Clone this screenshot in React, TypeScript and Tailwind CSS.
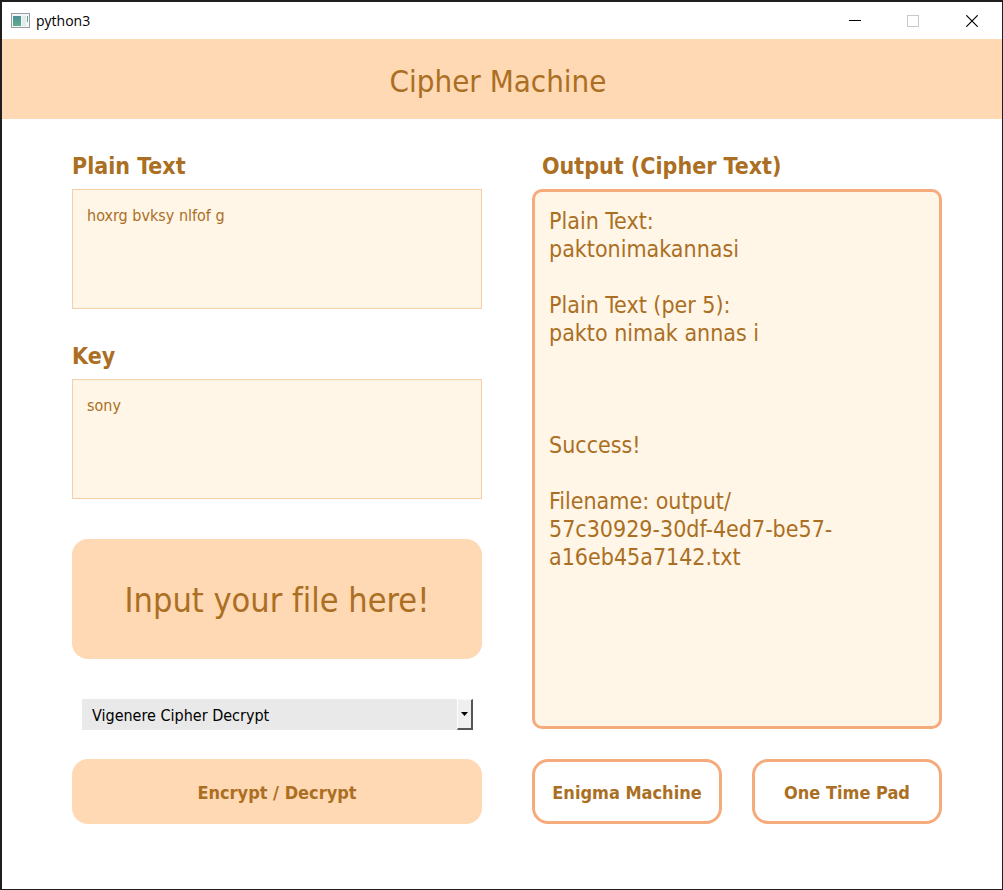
import { useState } from "react";

const outputText = `Plain Text:
paktonimakannasi

Plain Text (per 5):
pakto nimak annas i



Success!

Filename: output/
57c30929-30df-4ed7-be57-
a16eb45a7142.txt`;

const ciphers = [
  "Vigenere Cipher Encrypt",
  "Vigenere Cipher Decrypt",
  "Playfair Cipher Encrypt",
  "Playfair Cipher Decrypt",
];

function TitleBar() {
  return (
    <header className="flex h-[37px] items-center bg-white pl-[9px] text-black">
      <svg width="19" height="15" viewBox="0 0 19 15" aria-hidden="true">
        <defs>
          <linearGradient id="app-pane" x1="0" y1="0" x2="0" y2="1">
            <stop offset="0" stopColor="#4b8f96" />
            <stop offset="1" stopColor="#5fae8c" />
          </linearGradient>
        </defs>
        <rect x="0.5" y="0.5" width="18" height="14" fill="#f4f5f6" stroke="#9a9ea6" />
        <rect x="2" y="3" width="8" height="10" fill="url(#app-pane)" />
        <rect x="11" y="3" width="4" height="10" fill="#e4e9ec" />
        <rect x="16" y="3" width="1" height="6" fill="#5fa890" />
      </svg>
      <span className="grow pl-[6px] font-['Open_Sans','Noto_Sans',sans-serif] text-sm">python3</span>
      <button type="button" aria-label="Minimize" className="flex h-full w-[58px] items-center justify-center">
        <svg width="12" height="12" viewBox="0 0 12 12" shapeRendering="crispEdges">
          <path d="M0 5.5H12" stroke="#000" />
        </svg>
      </button>
      <button type="button" aria-label="Maximize" disabled className="flex h-full w-[58px] items-center justify-center">
        <svg width="12" height="12" viewBox="0 0 12 12">
          <rect x="0.5" y="0.5" width="11" height="11" fill="none" stroke="#c8c8c8" />
        </svg>
      </button>
      <button type="button" aria-label="Close" className="flex h-full w-[60px] items-center justify-center">
        <svg width="12" height="12" viewBox="0 0 12 12">
          <path d="M0.3 0.3L11.7 11.7M11.7 0.3L0.3 11.7" stroke="#000" strokeWidth="1.2" />
        </svg>
      </button>
    </header>
  );
}

const labelClass = "flex h-[30px] items-center pt-1 text-[23px] font-bold";
const inputClass =
  "block h-[120px] w-full resize-none border border-[#f5cfa9] bg-[#fff6e8] px-[14px] py-4 text-base leading-5 outline-none";
const outlineButton = "h-[65px] rounded-2xl border-3 border-[#f5ab7c] bg-white pt-0.5 text-lg font-bold";

export default function App() {
  const [plain, setPlain] = useState("hoxrg bvksy nlfof g");
  const [key, setKey] = useState("sony");
  const [cipher, setCipher] = useState("Vigenere Cipher Decrypt");

  return (
    <div className="flex min-h-screen flex-col border-t-2 border-r border-b border-l-2 border-[#1e1e1e] bg-white font-['DejaVu_Sans_Condensed','DejaVu_Sans',sans-serif] text-[#ab6f23] [font-variant-ligatures:none]">
      <TitleBar />
      <h1 className="flex h-20 items-center justify-center bg-[#ffd8b4] pt-1 pr-2 text-[31px]">
        Cipher Machine
      </h1>
      <main className="grid grid-cols-2 gap-x-[50px] pt-[30px] pr-[60px] pl-[70px]">
        <div className="flex flex-col">
          <label htmlFor="plain" className={labelClass}>Plain Text</label>
          <textarea id="plain" className={`${inputClass} mt-[10px]`} value={plain} onChange={(e) => setPlain(e.target.value)} />
          <label htmlFor="key" className={`${labelClass} mt-[30px]`}>Key</label>
          <textarea id="key" className={`${inputClass} mt-[10px]`} value={key} onChange={(e) => setKey(e.target.value)} />
          <button type="button" className="mt-10 h-[120px] rounded-2xl bg-[#ffd8b4] pt-0.5 text-[34px] [font-feature-settings:'liga'_0]">
            Input your file here!
          </button>
          <div className="relative mr-[9px] ml-[10px] mt-10 h-[31px] text-black">
            <select
              aria-label="Cipher"
              className="h-full w-full appearance-none bg-[#e9e9e9] pt-0.5 pl-[10px] text-base outline-none"
              value={cipher}
              onChange={(e) => setCipher(e.target.value)}
            >
              {ciphers.map((name) => (
                <option key={name}>{name}</option>
              ))}
            </select>
            <span className="pointer-events-none absolute inset-y-0 right-0 flex w-4 items-center justify-center border-t border-r-2 border-b-2 border-l border-t-[#f8f8f8] border-r-[#555555] border-b-[#555555] border-l-white bg-[#efefef]">
              <svg width="7" height="4" viewBox="0 0 7 4">
                <path d="M0 0H7L3.5 4Z" fill="#000" />
              </svg>
            </span>
          </div>
          <button type="button" className="mt-[29px] h-[65px] rounded-2xl bg-[#ffd8b4] pt-0.5 text-lg font-bold">
            Encrypt / Decrypt
          </button>
        </div>
        <div className="flex flex-col">
          <label htmlFor="output" className={`${labelClass} pl-[10px]`}>Output (Cipher Text)</label>
          <textarea
            id="output"
            readOnly
            value={outputText}
            className="mt-[10px] block h-[540px] w-full resize-none rounded-[10px] border-3 border-[#f5ab7c] bg-[#fff6e8] px-[14px] py-[15px] text-[23px] leading-7 outline-none"
          />
          <div className="mt-[30px] grid grid-cols-2 gap-[30px]">
            <button type="button" className={outlineButton}>Enigma Machine</button>
            <button type="button" className={outlineButton}>One Time Pad</button>
          </div>
        </div>
      </main>
    </div>
  );
}
